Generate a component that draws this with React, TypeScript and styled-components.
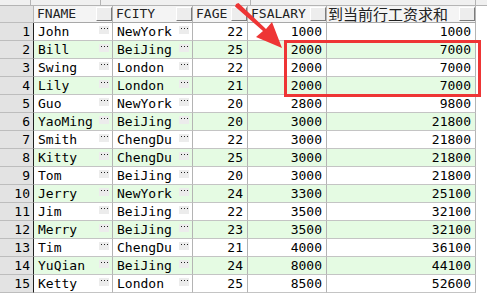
import React from "react";
import styled, { createGlobalStyle } from "styled-components";

const Global = createGlobalStyle`
  html, body { margin: 0; padding: 0; background: #ffffff; }
  body { font-family: "DejaVu Sans Mono", "Liberation Mono", monospace; }
`;

const COLS = [
  { key: "name", title: "FNAME", w: 79, align: "left", btn: true },
  { key: "city", title: "FCITY", w: 80, align: "left", btn: true },
  { key: "age", title: "FAGE", w: 55, align: "right", btn: false },
  { key: "sal", title: "FSALARY", w: 79, align: "right", btn: false },
  { key: "sum", title: "到当前行工资求和", w: 149, align: "right", btn: false, cjk: true },
] as const;

const ROWS = [
  ["John", "NewYork", 22, 1000, 1000],
  ["Bill", "BeiJing", 25, 2000, 7000],
  ["Swing", "London", 22, 2000, 7000],
  ["Lily", "London", 21, 2000, 7000],
  ["Guo", "NewYork", 20, 2800, 9800],
  ["YaoMing", "BeiJing", 20, 3000, 21800],
  ["Smith", "ChengDu", 22, 3000, 21800],
  ["Kitty", "ChengDu", 25, 3000, 21800],
  ["Tom", "BeiJing", 20, 3000, 21800],
  ["Jerry", "NewYork", 24, 3300, 25100],
  ["Jim", "BeiJing", 22, 3500, 32100],
  ["Merry", "BeiJing", 23, 3500, 32100],
  ["Tim", "ChengDu", 21, 4000, 36100],
  ["YuQian", "BeiJing", 24, 8000, 44100],
  ["Ketty", "London", 25, 8500, 52600],
];

const Page = styled.div`
  position: relative;
  width: 487px;
  height: 295px;
  overflow: hidden;
  background: #ffffff;
`;

const TopStrip = styled.div`
  display: flex;
  height: 5px;
  background: #f0f0f0;
  border-bottom: 1px solid #b4b4b4;
`;

const StripCell = styled.div<{ $w: number }>`
  width: ${(p) => p.$w}px;
  flex: none;
  border-right: 1px solid #b4b4b4;
  box-sizing: border-box;
`;

const Row = styled.div<{ $h: number }>`
  display: flex;
  height: ${(p) => p.$h}px;
`;

const NumCell = styled.div<{ $header?: boolean }>`
  width: 34px;
  flex: none;
  box-sizing: border-box;
  background: #e3e3e3;
  border-right: 1px solid ${(p) => (p.$header ? "#b4b4b4" : "#202020")};
  border-bottom: 1px solid #bdbdbd;
  color: #000;
  font-size: 13px;
  line-height: 17px;
  text-align: right;
  padding-right: 3px;
`;

const HeadCell = styled.div<{ $w: number; $cjk?: boolean }>`
  position: relative;
  width: ${(p) => p.$w}px;
  flex: none;
  box-sizing: border-box;
  background: #f4f4f4;
  border-right: 1px solid #b4b4b4;
  border-bottom: 1px solid #a8a8a8;
  color: #222;
  padding-left: ${(p) => (p.$cjk ? "1px" : "3px")};
  font-family: ${(p) =>
    p.$cjk
      ? `"Noto Sans CJK SC", sans-serif`
      : `"DejaVu Sans Mono", "Liberation Mono", monospace`};
  font-size: ${(p) => (p.$cjk ? "15px" : "13px")};
  line-height: 16px;
  white-space: nowrap;
`;

const SortBtn = styled.span`
  position: absolute;
  right: 0;
  top: 1px;
  width: 16px;
  height: 14px;
  box-sizing: border-box;
  background: #ededed;
  border-top: 1px solid #ffffff;
  border-left: 1px solid #ffffff;
  border-right: 1px solid #7c7c7c;
  border-bottom: 1px solid #7c7c7c;
`;

const Cell = styled.div<{ $w: number; $align: string; $alt: boolean }>`
  position: relative;
  width: ${(p) => p.$w}px;
  flex: none;
  box-sizing: border-box;
  background: ${(p) => (p.$alt ? "#e5fbe3" : "#ffffff")};
  border-right: 1px solid #b4b4b4;
  border-bottom: 1px solid #c4c4c4;
  color: #000;
  font-size: 13px;
  line-height: 17px;
  text-align: ${(p) => p.$align};
  padding: 0 4px 0 4px;
  white-space: nowrap;
`;

const Ellipsis = styled.span`
  position: absolute;
  right: 3px;
  top: 3px;
  width: 10px;
  height: 8px;
  background: #ececec;
  display: flex;
  justify-content: center;
  align-items: flex-start;
`;

const Dot = styled.i`
  width: 1px;
  height: 1px;
  margin: 2px 1px 0;
  background: #222;
`;

const Filler = styled.div`
  flex: 1;
  background: #ffffff;
`;

const Overlay = styled.svg`
  position: absolute;
  left: 0;
  top: 0;
  pointer-events: none;
`;

export default function App() {
  return (
    <Page>
      <Global />
      <TopStrip>
        <StripCell $w={31} />
        <StripCell $w={70} />
        <StripCell $w={150} />
        <StripCell $w={225} />
      </TopStrip>
      <Row $h={17}>
        <NumCell $header />
        {COLS.map((c) => (
          <HeadCell key={c.key} $w={c.w} $cjk={"cjk" in c}>
            {c.title}
            <SortBtn />
          </HeadCell>
        ))}
        <Filler />
      </Row>
      {ROWS.map((r, i) => {
        const alt = i % 2 === 1;
        return (
          <Row $h={18} key={i}>
            <NumCell>{i + 1}</NumCell>
            {COLS.map((c, j) => (
              <Cell key={c.key} $w={c.w} $align={c.align} $alt={alt}>
                {r[j]}
                {c.btn && (
                  <Ellipsis aria-label="more">
                    <Dot />
                    <Dot />
                    <Dot />
                  </Ellipsis>
                )}
              </Cell>
            ))}
            <Filler />
          </Row>
        );
      })}
      <Overlay width={487} height={295} viewBox="0 0 487 295">
        <rect x={285.5} y={41.5} width={194} height={54} fill="none" stroke="#ee3535" strokeWidth={3} />
        <path d="M236 4 L238.5 3 L266 29 L272 22 L282 48 L256 37 L263 31 L235 6.5 Z" fill="#ee3535" />
      </Overlay>
    </Page>
  );
}
